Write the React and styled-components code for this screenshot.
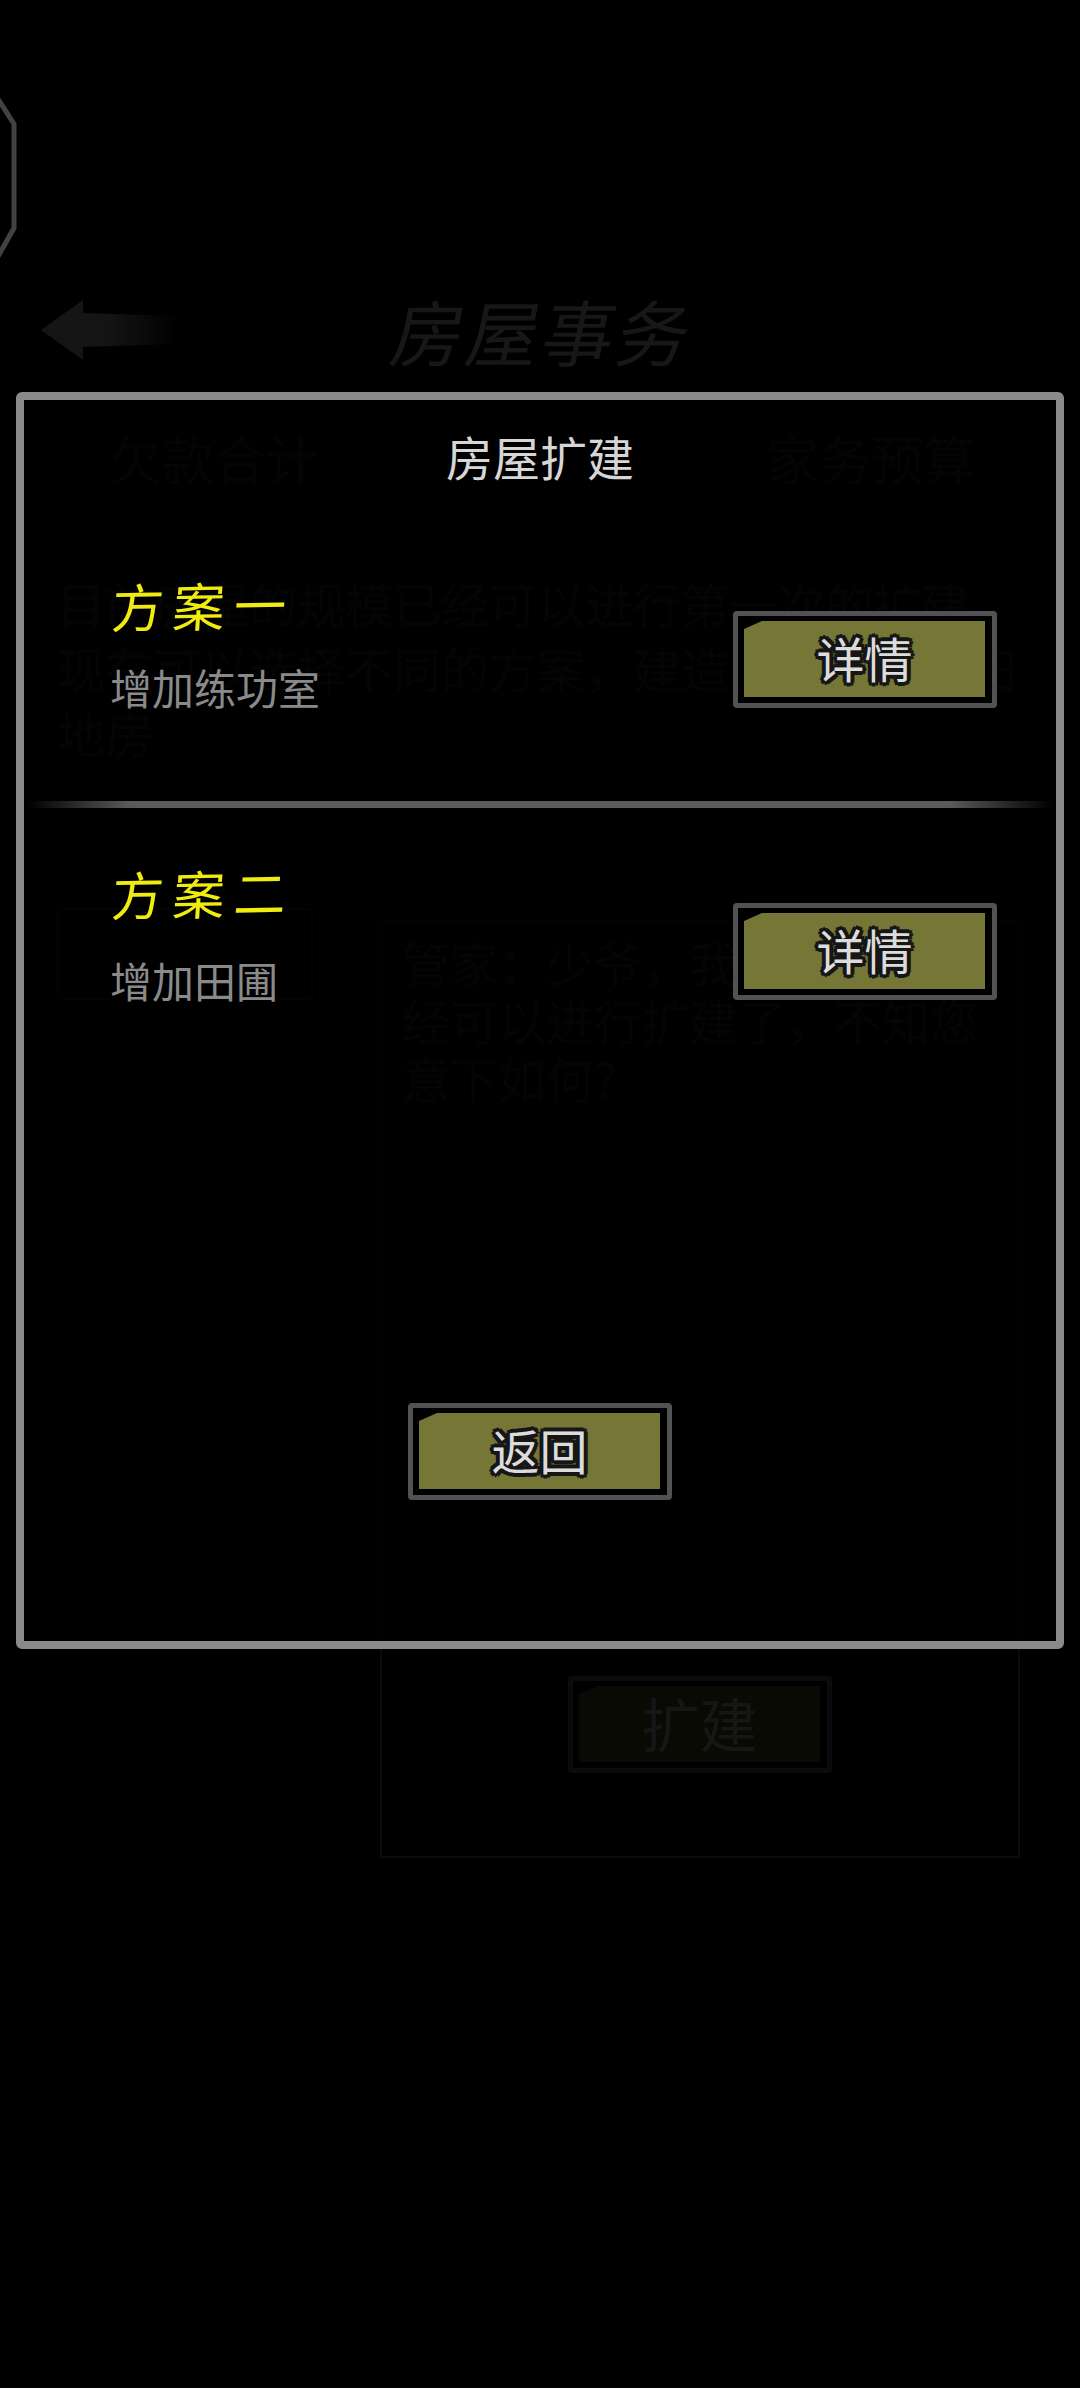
import React from 'react';
import styled, { createGlobalStyle } from 'styled-components';

const GlobalStyle = createGlobalStyle`
  html, body {
    margin: 0;
    padding: 0;
    background: #000;
  }
  body {
    font-family: "Noto Sans CJK SC", "Noto Sans", sans-serif;
  }
`;

const Page = styled.div`
  position: relative;
  width: 1080px;
  height: 2388px;
  overflow: hidden;
  background: #000;
`;

/* dimmed screen behind the dialog */
const Backdrop = styled.div`
  display: flex;
  flex-direction: column;
  color: #181818;
`;

const Badge = styled.svg`
  display: block;
  margin-top: 92px;
  width: 20px;
  height: 172px;
`;

const Header = styled.header`
  display: grid;
  grid-template-columns: 1fr auto 1fr;
  align-items: center;
  margin-top: 26px;
  height: 80px;
`;

const BackArrow = styled.svg`
  display: block;
  margin-left: 40px;
  width: 138px;
  height: 62px;
`;

const ScreenTitle = styled.h1`
  margin: 0 0 0 8px;
  font-size: 72px;
  font-weight: 400;
  line-height: 80px;
  letter-spacing: 3px;
  color: #171717;
  transform: skewX(-12deg);
`;

const Tabs = styled.nav`
  display: flex;
  justify-content: space-between;
  margin-top: 58px;
  padding: 0 105px 0 110px;
  font-size: 52px;
  line-height: 60px;
  color: #181818;
`;

const Intro = styled.p`
  margin: 82px 0 0;
  padding-left: 57px;
  width: 965px;
  font-size: 48px;
  line-height: 65px;
`;

const Columns = styled.div`
  display: grid;
  grid-template-columns: 256px 640px;
  column-gap: 67px;
  align-items: start;
  margin-top: 143px;
  padding-left: 57px;
`;

const SideBox = styled.div`
  box-sizing: border-box;
  height: 92px;
  border: 2px solid #101010;
`;

const DetailBox = styled.section`
  display: flex;
  flex-direction: column;
  align-items: center;
  box-sizing: border-box;
  margin-top: 12px;
  height: 938px;
  padding: 10px 20px 0;
  border: 2px solid #0c0c0c;
`;

const DetailText = styled.p`
  margin: 0;
  width: 100%;
  font-size: 48px;
  line-height: 58px;
`;

const DetailAction = styled.div`
  margin-top: 570px;
`;

/* dialog on top */
const Modal = styled.div`
  position: absolute;
  top: 392px;
  left: 16px;
  display: flex;
  flex-direction: column;
  box-sizing: border-box;
  width: 1048px;
  height: 1257px;
  border: 8px solid #8a8a8a;
  border-radius: 6px;
  background: rgba(0, 0, 0, 0.8);
`;

const ModalTitle = styled.h2`
  margin: 26px 0 2px;
  font-size: 47px;
  font-weight: 400;
  line-height: 60px;
  text-align: center;
  color: #d6d6d6;
`;

const Option = styled.div`
  display: flex;
  justify-content: space-between;
  align-items: flex-start;
  box-sizing: border-box;
  height: ${p => p.$height}px;
  padding: ${p => p.$top}px 59px 0 86px;
`;

const OptionInfo = styled.div`
  display: flex;
  flex-direction: column;
  gap: ${p => p.$gap}px;
`;

const OptionName = styled.div`
  margin-left: 2px;
  font-size: 52px;
  line-height: 60px;
  letter-spacing: 9px;
  color: #f0ec10;
  transform: skewX(-5deg) rotate(-1deg);
  transform-origin: left center;
`;

const OptionDesc = styled.div`
  font-size: 42px;
  line-height: 60px;
  color: #8a8a8a;
`;

const Divider = styled.div`
  flex: none;
  margin: 0 4px;
  height: 7px;
  background: linear-gradient(90deg, transparent 0, #5a5a5a 10%, #5a5a5a 90%, transparent 100%);
`;

const ButtonFrame = styled.button`
  display: block;
  box-sizing: border-box;
  flex: none;
  width: 264px;
  height: 97px;
  margin-top: ${p => p.$offset || 0}px;
  padding: 5px 7px 6px 6px;
  border: 5px solid ${p => p.$dim ? '#0b0b0b' : '#525252'};
  border-radius: 4px;
  background: #000;
  font-family: inherit;
`;

const ButtonFace = styled.span`
  display: flex;
  align-items: center;
  justify-content: center;
  height: 100%;
  background: ${p => p.$dim ? '#0a0a05' : '#767636'};
  clip-path: polygon(0 8px, 18px 0, 100% 0, 100% 100%, 0 100%);
`;

const ButtonLabel = styled.span`
  margin-top: -4px;
  font-size: ${p => p.$dim ? 58 : 48}px;
  line-height: 1;
  color: ${p => p.$dim ? '#161616' : '#dcdcdc'};
  ${p => !p.$dim && `
    text-shadow:
      4px 0 0 #161616, -4px 0 0 #161616, 0 4px 0 #161616, 0 -4px 0 #161616,
      3px 3px 0 #161616, -3px 3px 0 #161616, 3px -3px 0 #161616, -3px -3px 0 #161616;
  `}
`;

const ModalFooter = styled.div`
  display: flex;
  justify-content: center;
  margin-top: 220px;
`;

const GameButton = ({ children, offset, dim }) => (
  <ButtonFrame $offset={offset} $dim={dim}>
    <ButtonFace $dim={dim}>
      <ButtonLabel $dim={dim}>{children}</ButtonLabel>
    </ButtonFace>
  </ButtonFrame>
);

const App = () => (
  <Page>
    <GlobalStyle />
    <Backdrop>
      <Badge viewBox="0 0 20 172">
        <path d="M-4 4 L14 32 L14 136 L-4 168" fill="none" stroke="#424242" strokeWidth="5" />
      </Badge>
      <Header>
        <BackArrow viewBox="0 0 138 62">
          <defs>
            <linearGradient id="arrowFade" x1="0" x2="1" y1="0" y2="0">
              <stop offset="0" stopColor="#151515" />
              <stop offset="0.5" stopColor="#141414" />
              <stop offset="1" stopColor="#141414" stopOpacity="0" />
            </linearGradient>
          </defs>
          <path d="M1 31 L43 1 L43 14 L137 17 L137 45 L43 48 L43 61 Z" fill="url(#arrowFade)" />
        </BackArrow>
        <ScreenTitle>房屋事务</ScreenTitle>
        <span />
      </Header>
      <Tabs>
        <span>欠款合计</span>
        <span>家务预算</span>
      </Tabs>
      <Intro>目前房屋的规模已经可以进行第一次的扩建，现在可以选择不同的方案，建造新的房间或田地房</Intro>
      <Columns>
        <SideBox />
        <DetailBox>
          <DetailText>管家：少爷，我们的房屋已经可以进行扩建了，不知您意下如何?</DetailText>
          <DetailAction>
            <GameButton dim>扩建</GameButton>
          </DetailAction>
        </DetailBox>
      </Columns>
    </Backdrop>

    <Modal>
      <ModalTitle>房屋扩建</ModalTitle>
      <Option $height={313} $top={88}>
        <OptionInfo $gap={21}>
          <OptionName>方案一</OptionName>
          <OptionDesc>增加练功室</OptionDesc>
        </OptionInfo>
        <GameButton offset={35}>详情</GameButton>
      </Option>
      <Divider />
      <Option $height={375} $top={56}>
        <OptionInfo $gap={26}>
          <OptionName>方案二</OptionName>
          <OptionDesc>增加田圃</OptionDesc>
        </OptionInfo>
        <GameButton offset={39}>详情</GameButton>
      </Option>
      <ModalFooter>
        <GameButton>返回</GameButton>
      </ModalFooter>
    </Modal>
  </Page>
);

export default App;
